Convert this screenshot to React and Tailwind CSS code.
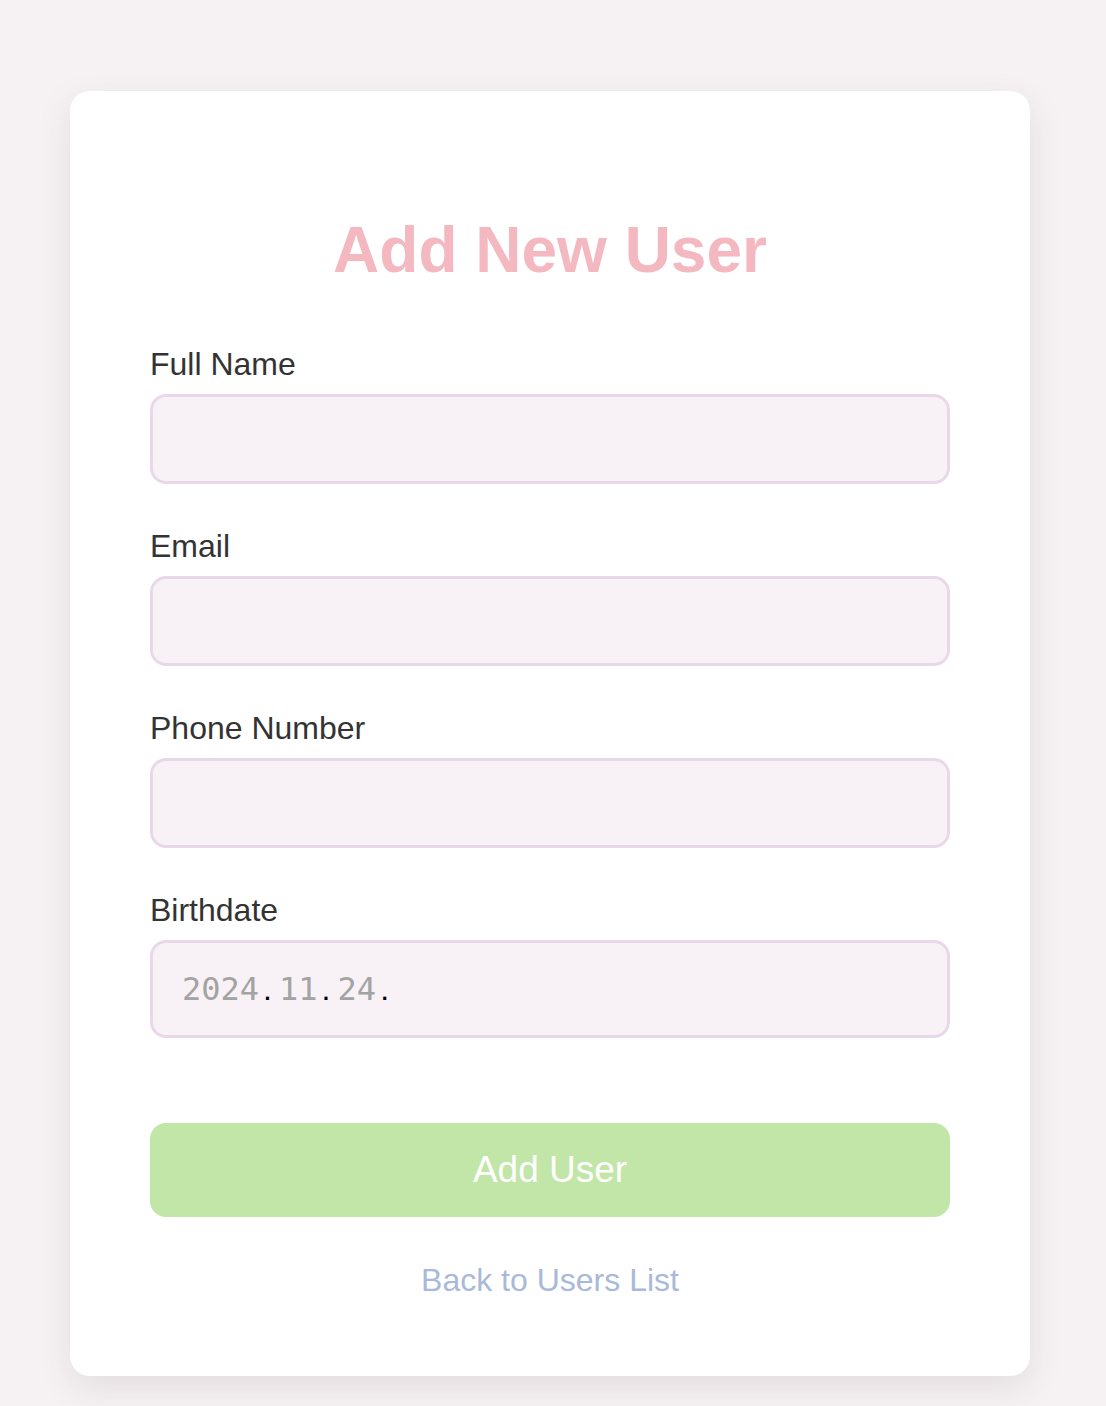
const FIELDS = [
  { id: 'name', label: 'Full Name', type: 'text' },
  { id: 'email', label: 'Email', type: 'email' },
  { id: 'phone', label: 'Phone Number', type: 'tel' },
]

function Sep() {
  return (
    <span className="inline-block w-[20px] pl-[4px] font-['Liberation_Sans',Arial,sans-serif] text-black">
      .
    </span>
  )
}

function DateBox() {
  // fake native date input so it looks like the Safari one
  return (
    <div className="flex h-[98px] w-full items-center rounded-[16px] border-[3px] border-[#e8d8ea] bg-[#f8f2f7] pl-[29px] font-['DejaVu_Sans_Mono',monospace] text-[32px] text-[#a3a3a3]">
      <span>2024</span>
      <Sep />
      <span>11</span>
      <Sep />
      <span>24</span>
      <Sep />
    </div>
  )
}

export default function App() {
  return (
    <div className="min-h-[1406px] bg-[#f6f2f3] pt-[91px] font-['Liberation_Sans',Arial,sans-serif]">
      <div className="ml-[70px] w-[960px] rounded-[20px] bg-white px-[80px] pb-[78px] pt-[127px] shadow-[0_12px_36px_rgba(60,40,50,0.10)]">
        <h1 className="text-center text-[64px] font-bold leading-[64px] text-[#f4b8c1]">
          Add New User
        </h1>

        <form className="mt-[64px] flex flex-col gap-[44px]">
          {FIELDS.map((f) => (
            <div key={f.id}>
              <label
                htmlFor={f.id}
                className="mb-[12px] block text-[32px] leading-[36px] text-[#333333]"
              >
                {f.label}
              </label>
              <input
                id={f.id}
                type={f.type}
                className="block h-[90px] w-full rounded-[16px] border-[3px] border-[#e8d8ea] bg-[#f8f2f7] px-[29px] text-[32px] outline-none"
              />
            </div>
          ))}
          <div>
            <label className="mb-[12px] block text-[32px] leading-[36px] text-[#333333]">
              Birthdate
            </label>
            <DateBox />
          </div>
        </form>

        <button
          type="button"
          className="mt-[85px] block h-[94px] w-full rounded-[16px] bg-[#c1e6a8] text-[37px] text-white"
        >
          Add User
        </button>

        <div className="mt-[45px] text-center text-[32px] leading-[36px]">
          <a href="#" className="text-[#a9b9d9]">
            Back to Users List
          </a>
        </div>
      </div>
    </div>
  )
}
